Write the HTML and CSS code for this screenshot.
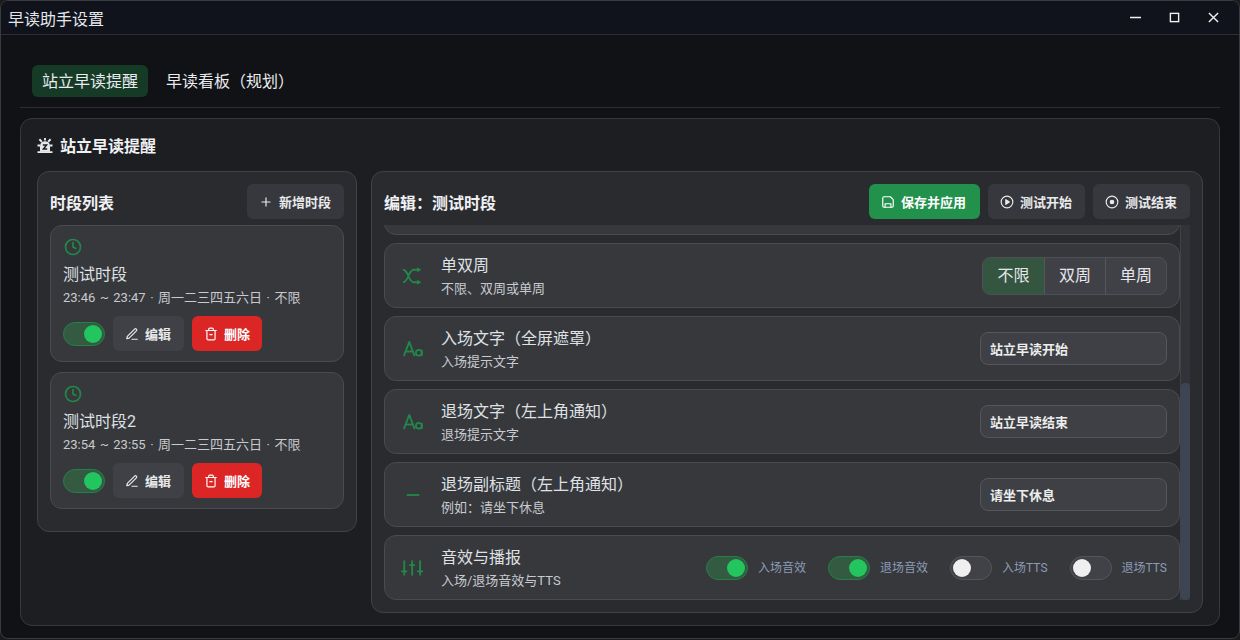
FILE: index.html
```html
<!DOCTYPE html>
<html lang="zh-CN">
<head>
    <meta charset="UTF-8">
    <title>早读助手设置</title>
    <link rel="stylesheet" href="styles.css">
</head>
<body>
<svg class="sprite" width="0" height="0">
    <symbol id="i-clock" viewBox="0 0 24 24"><circle cx="12" cy="12" r="10"/><path d="M12 6v6l4 2"/></symbol>
    <symbol id="i-pen" viewBox="0 0 24 24"><path d="M12 21h9"/><path d="M16.500 3.500a2.100 2.100 0 0 1 3 3L7 19l-4 1 1-4z"/></symbol>
    <symbol id="i-trash" viewBox="0 0 24 24"><path d="M3 6h18"/><path d="M19 6v14a2 2 0 0 1-2 2H7a2 2 0 0 1-2-2V6"/><path d="M8 6V4a2 2 0 0 1 2-2h4a2 2 0 0 1 2 2v2"/><path d="M10 13h4"/></symbol>
    <symbol id="i-text" viewBox="0 0 24 24"><path d="M3 15h9"/><path d="m1 20.500 6.500-17 6.500 17"/><circle cx="19" cy="16.500" r="3.500"/><path d="M22.500 13v7.500"/></symbol>
</svg>

<div class="window">
    <div class="titlebar">
        <span class="title">早读助手设置</span>
        <div class="win-btns">
            <svg class="win-btn" viewBox="0 0 12 12"><path d="M0 6h12"/></svg>
            <svg class="win-btn" viewBox="0 0 12 12"><rect x="1.500" y="1.500" width="9" height="9"/></svg>
            <svg class="win-btn" viewBox="0 0 12 12"><path d="M1 1l10 10M11 1L1 11"/></svg>
        </div>
    </div>

    <div class="content">
        <div class="tabs">
            <span class="tab active">站立早读提醒</span>
            <span class="tab">早读看板（规划）</span>
        </div>

        <div class="card">
            <h2 class="card-title">
                <svg class="alarm" viewBox="0 0 24 24"><path d="M12 0v4M3 2l4 4M21 2l-4 4M0 12h4M20 12h4M0 22.500h24"/><path class="body" d="M4 22v-9a8 8 0 0 1 16 0v9z"/><path class="cut" d="M8.500 11h6l-5 6.500h6"/></svg>
                站立早读提醒
            </h2>

            <div class="columns">
                <section class="panel list-panel">
                    <div class="panel-head">
                        <h3>时段列表</h3>
                        <button class="btn"><svg class="ico" viewBox="0 0 24 24"><path d="M5 12h14M12 5v14"/></svg>新增时段</button>
                    </div>
                    <div class="period">
                        <svg class="ico-clock"><use href="#i-clock"/></svg>
                        <div class="period-name">测试时段</div>
                        <div class="period-info">23:46 ~ 23:47 · 周一二三四五六日 · 不限</div>
                        <div class="period-actions">
                            <span class="switch on"></span>
                            <button class="btn"><svg class="ico"><use href="#i-pen"/></svg>编辑</button>
                            <button class="btn danger"><svg class="ico"><use href="#i-trash"/></svg>删除</button>
                        </div>
                    </div>
                    <div class="period">
                        <svg class="ico-clock"><use href="#i-clock"/></svg>
                        <div class="period-name">测试时段2</div>
                        <div class="period-info">23:54 ~ 23:55 · 周一二三四五六日 · 不限</div>
                        <div class="period-actions">
                            <span class="switch on"></span>
                            <button class="btn"><svg class="ico"><use href="#i-pen"/></svg>编辑</button>
                            <button class="btn danger"><svg class="ico"><use href="#i-trash"/></svg>删除</button>
                        </div>
                    </div>
                </section>

                <section class="panel edit-panel">
                    <div class="panel-head">
                        <h3>编辑：测试时段</h3>
                        <div class="head-btns">
                            <button class="btn primary"><svg class="ico" viewBox="0 0 24 24"><path d="M19 21H5a2 2 0 0 1-2-2V5a2 2 0 0 1 2-2h11l5 5v11a2 2 0 0 1-2 2z"/><path d="M7 21v-6h10v6"/></svg>保存并应用</button>
                            <button class="btn"><svg class="ico" viewBox="0 0 24 24"><circle cx="12" cy="12" r="10"/><path class="fill" d="m10 8 6 4-6 4z"/></svg>测试开始</button>
                            <button class="btn"><svg class="ico" viewBox="0 0 24 24"><circle cx="12" cy="12" r="10"/><circle class="fill" cx="12" cy="12" r="3"/></svg>测试结束</button>
                        </div>
                    </div>

                    <div class="scroller">
                        <div class="rows">
                            <div class="row"></div>
                            <div class="row">
                                <svg class="ico-row" viewBox="0 0 24 24"><path d="M0 4.500c7 0 6 15 13 15h5M0 19.500c7 0 6-15 13-15h5"/><path class="fill" d="m17 1.500 5 3-5 3zM17 16.500l5 3-5 3z"/></svg>
                                <div class="row-text"><div class="row-name">单双周</div><div class="row-desc">不限、双周或单周</div></div>
                                <div class="segment">
                                    <span class="seg active">不限</span>
                                    <span class="seg">双周</span>
                                    <span class="seg">单周</span>
                                </div>
                            </div>
                            <div class="row">
                                <svg class="ico-row"><use href="#i-text"/></svg>
                                <div class="row-text"><div class="row-name">入场文字（全屏遮罩）</div><div class="row-desc">入场提示文字</div></div>
                                <div class="field">站立早读开始</div>
                            </div>
                            <div class="row">
                                <svg class="ico-row"><use href="#i-text"/></svg>
                                <div class="row-text"><div class="row-name">退场文字（左上角通知）</div><div class="row-desc">退场提示文字</div></div>
                                <div class="field">站立早读结束</div>
                            </div>
                            <div class="row">
                                <svg class="ico-row" viewBox="0 0 24 24"><path d="M4.500 12h15"/></svg>
                                <div class="row-text"><div class="row-name">退场副标题（左上角通知）</div><div class="row-desc">例如：请坐下休息</div></div>
                                <div class="field">请坐下休息</div>
                            </div>
                            <div class="row">
                                <svg class="ico-row" viewBox="0 0 24 24"><path d="M1.500 3v18M11 3v18M20.500 3v18M-2 16h7M7.500 8.500h7M17 16h7"/></svg>
                                <div class="row-text"><div class="row-name">音效与播报</div><div class="row-desc">入场/退场音效与TTS</div></div>
                                <div class="toggles">
                                    <label class="toggle"><span class="switch on"></span>入场音效</label>
                                    <label class="toggle"><span class="switch on"></span>退场音效</label>
                                    <label class="toggle"><span class="switch"></span>入场TTS</label>
                                    <label class="toggle"><span class="switch"></span>退场TTS</label>
                                </div>
                            </div>
                        </div>
                        <div class="scrollbar"><div class="thumb"></div></div>
                    </div>
                </section>
            </div>
        </div>
    </div>
</div>
</body>
</html>
```

FILE: styles.css
```css
* {
    box-sizing: border-box;
}
html, body {
    margin: 0;
    height: 100%;
    overflow: hidden;
    background: #1b1a1c;
}
body {
    font-family: Roboto, "Noto Sans CJK SC", sans-serif;
    color: #e5e7eb;
}
.sprite {
    position: absolute;
}
h2, h3 {
    margin: 0;
}
button {
    font-family: inherit;
}

/* window */
.window {
    height: 639px;
    display: flex;
    flex-direction: column;
    border: 1px solid #3a3b40;
    border-radius: 8px;
    background: #111216;
    overflow: hidden;
}
.titlebar {
    height: 34px;
    flex: none;
    display: flex;
    align-items: center;
    justify-content: space-between;
    padding-left: 7px;
    background: #10131b;
    border-bottom: 1px solid #2c2e33;
}
.title {
    font-size: 16px;
    color: #e5e7eb;
}
.win-btns {
    display: flex;
    gap: 28px;
    padding-right: 20px;
}
.win-btn {
    width: 11px;
    height: 11px;
    fill: none;
    stroke: #f1f1f1;
    stroke-width: 1.5;
}

.content {
    flex: 1;
    padding: 30px 19px 12px;
    min-height: 0;
    display: flex;
    flex-direction: column;
}

/* tabs */
.tabs {
    display: flex;
    gap: 8px;
    padding: 0 12px 10px;
    border-bottom: 1px solid #2c2d32;
    flex: none;
}
.tab {
    height: 32px;
    padding: 0 10px;
    font-size: 16px;
    line-height: 33px;
    color: #e9ebee;
    border-radius: 6px;
}
.tab.active {
    background: #153a26;
}

/* main card */
.card {
    flex: 1;
    margin-top: 10px;
    padding: 14px 16px 13px;
    background: #1d1e22;
    border: 1px solid #37383d;
    border-radius: 12px;
    display: flex;
    flex-direction: column;
    min-height: 0;
}
.card-title {
    display: flex;
    align-items: center;
    gap: 7px;
    height: 24px;
    font-size: 16px;
    font-weight: 700;
    color: #f0f1f3;
}
.alarm {
    width: 16px;
    height: 15px;
    overflow: visible;
    fill: none;
    stroke: #e8e9eb;
    stroke-width: 3;
}
.alarm .body {
    fill: #e8e9eb;
    stroke: none;
}
.alarm .cut {
    stroke: #1d1e22;
    stroke-width: 2.400;
}
.columns {
    flex: 1;
    margin-top: 14px;
    display: flex;
    gap: 14px;
    align-items: flex-start;
    min-height: 0;
}

/* panels */
.panel {
    background: #2a2b2f;
    border: 1px solid #414246;
    border-radius: 12px;
    padding: 12px;
}
.list-panel {
    width: 320px;
    height: 361px;
}
.edit-panel {
    flex: 1;
    height: 442px;
    display: flex;
    flex-direction: column;
}
.panel-head {
    display: flex;
    align-items: center;
    justify-content: space-between;
    height: 35px;
    margin-bottom: 6px;
    flex: none;
}
.panel-head h3 {
    font-size: 16px;
    font-weight: 700;
    color: #f0f1f3;
}
.head-btns {
    display: flex;
    gap: 8px;
}

/* buttons */
.btn {
    display: inline-flex;
    align-items: center;
    gap: 6px;
    height: 35px;
    padding: 0 13px 0 12px;
    border: 0;
    border-radius: 6px;
    background: #37383d;
    color: #e9eaec;
    font-size: 13px;
    font-weight: 700;
}
.btn.primary {
    background: #22914c;
    padding-right: 14px;
    color: #fff;
}
.btn.danger {
    background: #dc2626;
    padding-right: 12px;
    color: #fff;
}
.ico {
    flex: none;
    width: 14px;
    height: 14px;
    fill: none;
    stroke: currentColor;
    stroke-width: 2;
    stroke-linecap: round;
    stroke-linejoin: round;
}
.ico .fill {
    fill: currentColor;
}

/* period cards */
.period {
    height: 137px;
    margin-bottom: 10px;
    padding: 12px 12px;
    background: #37383c;
    border: 1px solid #4a4b50;
    border-radius: 12px;
}
.period .btn {
    background: #404146;
}
.period .btn.danger {
    background: #dc2626;
}
.ico-clock {
    display: block;
    width: 18px;
    height: 18px;
    margin-left: 1px;
    fill: none;
    stroke: #22884a;
    stroke-width: 2.200;
    stroke-linecap: round;
    stroke-linejoin: round;
}
.period-name {
    margin-top: 7px;
    font-size: 16px;
    line-height: 24px;
    color: #dfe1e5;
}
.period-info {
    margin-top: 1px;
    font-size: 13px;
    line-height: 20px;
    word-spacing: 1.300px;
    color: #c7cad0;
}
.period-actions {
    display: flex;
    align-items: center;
    gap: 8px;
    margin-top: 8px;
}

/* switch */
.switch {
    position: relative;
    display: inline-block;
    flex: none;
    width: 42px;
    height: 24px;
    border: 1px solid #55565c;
    border-radius: 12px;
    background: #414247;
}
.switch::after {
    content: "";
    position: absolute;
    top: 2px;
    left: 2px;
    width: 18px;
    height: 18px;
    border-radius: 50%;
    background: #efefef;
}
.switch.on {
    border-color: #22804a;
    background: #345a42;
}
.switch.on::after {
    left: 20px;
    background: #22c55e;
}

/* edit rows */
.scroller {
    flex: 1;
    min-height: 0;
    display: flex;
}
.rows {
    flex: 1;
    min-width: 0;
    display: flex;
    flex-direction: column;
    justify-content: flex-end;
    gap: 8px;
    overflow: hidden;
}
.row {
    flex: none;
    height: 65px;
    display: flex;
    align-items: center;
    padding: 0 12px 0 18px;
    background: #37383c;
    border: 1px solid #4a4b50;
    border-radius: 12px;
}
.ico-row {
    flex: none;
    width: 20px;
    height: 20px;
    overflow: visible;
    fill: none;
    stroke: #22884a;
    stroke-width: 2.200;
    stroke-linejoin: round;
}
.ico-row .fill {
    fill: #22884a;
    stroke: none;
}
.row-text {
    flex: 1;
    margin-left: 18px;
    margin-top: 1px;
    min-width: 0;
}
.row-name {
    font-size: 16px;
    line-height: 24px;
    color: #dfe1e5;
}
.row-desc {
    font-size: 13px;
    line-height: 20px;
    margin-top: 1px;
    color: #c7cad0;
}
.segment {
    display: flex;
    height: 38px;
    border: 1px solid #4f5055;
    border-radius: 8px;
    background: #404146;
    overflow: hidden;
}
.seg {
    width: 61px;
    font-size: 16px;
    line-height: 36px;
    text-align: center;
    color: #e5e7eb;
    border-left: 1px solid #56575c;
}
.seg:first-child {
    border-left: 0;
}
.seg.active {
    background: #345540;
}
.field {
    width: 187px;
    height: 33px;
    padding: 0 9px;
    font-size: 13px;
    font-weight: 700;
    line-height: 33px;
    color: #eceded;
    background: #3f4045;
    border: 1px solid #55565b;
    border-radius: 8px;
}
.toggles {
    display: flex;
    gap: 22px;
}
.toggle {
    display: flex;
    align-items: flex-start;
    gap: 10px;
    font-size: 12px;
    line-height: 24px;
    color: #8a9bb6;
}

/* scrollbar */
.scrollbar {
    flex: none;
    width: 10px;
    display: flex;
    flex-direction: column;
    justify-content: flex-end;
    background: #323338;
    border-left: 1px solid #414246;
}
.thumb {
    height: 217px;
    border-radius: 4px;
    background: #3d4452;
}
```
